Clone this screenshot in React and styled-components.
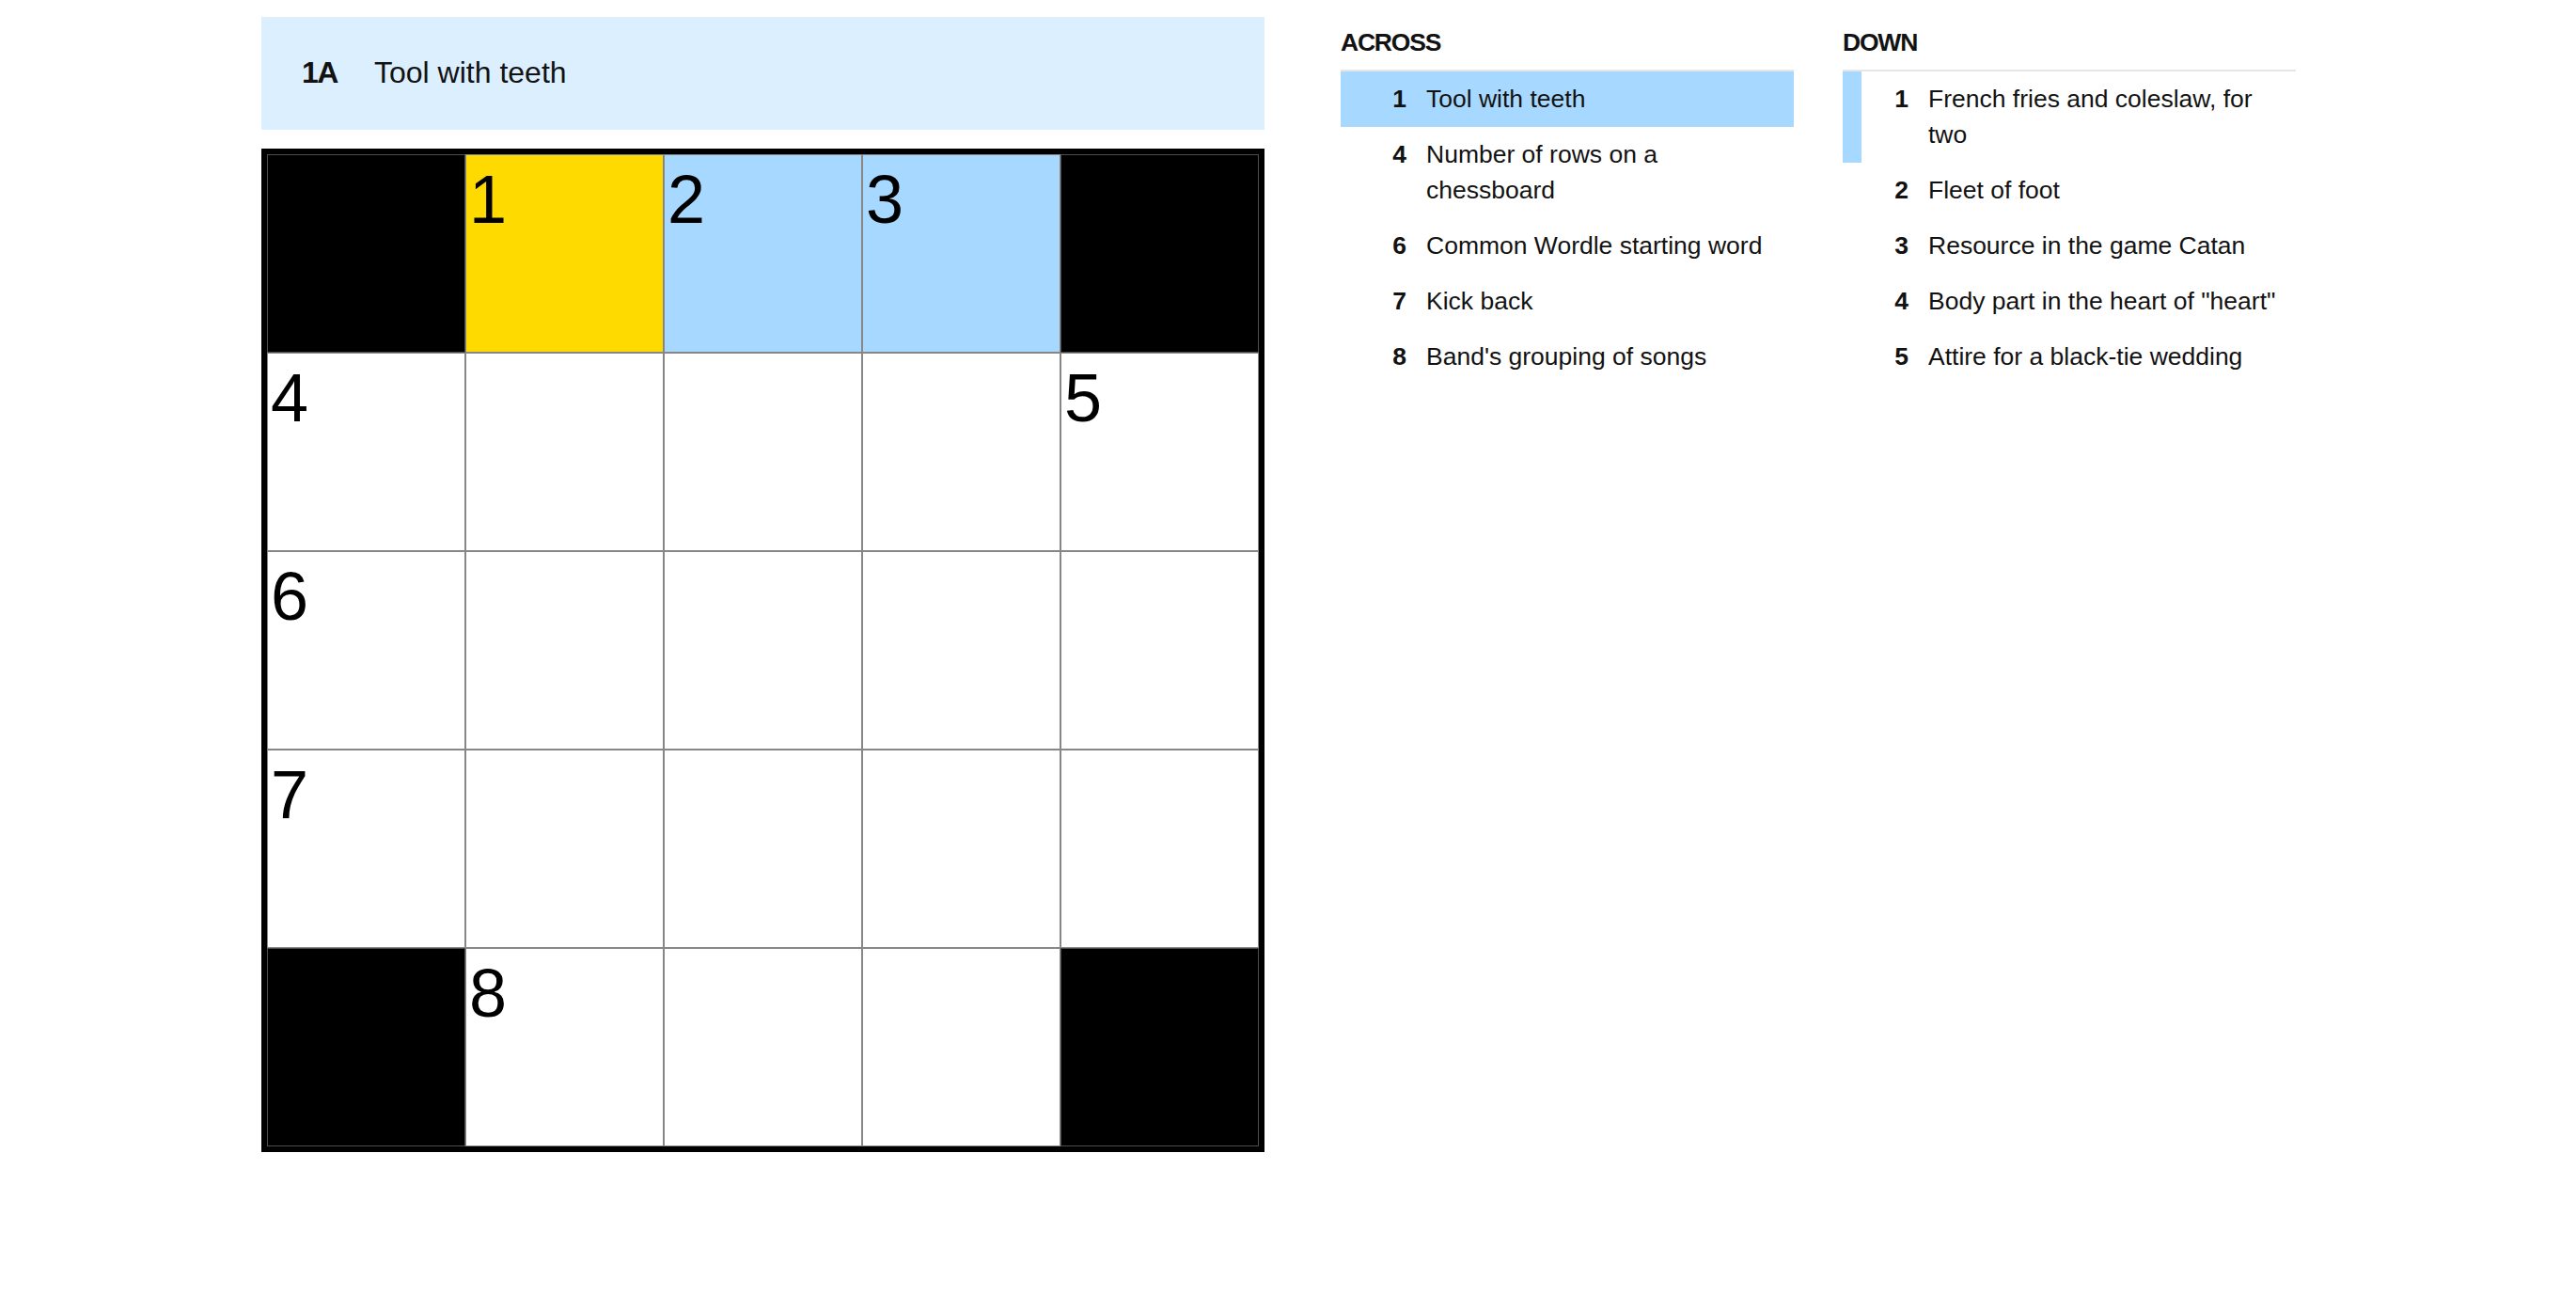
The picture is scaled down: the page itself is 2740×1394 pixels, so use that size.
import React from 'react';
import styled, { createGlobalStyle } from 'styled-components';

const GlobalStyle = createGlobalStyle`
  html, body {
    margin: 0;
    padding: 0;
    background: #ffffff;
  }
  body {
    font-family: "Liberation Sans", Arial, Helvetica, sans-serif;
    color: #121212;
  }
`;

const Page = styled.main`
  display: flex;
  align-items: flex-start;
  gap: 81px;
  padding: 18px 0 0 278px;
`;

const Board = styled.section`
  display: flex;
  flex-direction: column;
  gap: 20px;
  width: 1067px;
`;

const ClueBar = styled.div`
  box-sizing: border-box;
  height: 120px;
  display: flex;
  align-items: center;
  padding: 0 0 2px 43px;
  background: #dcefff;
  font-size: 32px;
  line-height: 1;
`;

const ClueBarLabel = styled.span`
  width: 77px;
  font-weight: 700;
  letter-spacing: -1.5px;
`;

const ClueBarText = styled.span`
  font-weight: 400;
`;

const Grid = styled.div`
  display: grid;
  grid-template-columns: repeat(5, 211px);
  grid-auto-rows: 211px;
  width: max-content;
  border: 6px solid #000000;
`;

const cellFill = {
  block: '#000000',
  active: '#ffda00',
  word: '#a7d8ff',
  open: '#ffffff',
};

const Cell = styled.div`
  box-sizing: border-box;
  border: 1px solid ${(p) => (p.$kind === 'block' ? '#4d4d4d' : '#878787')};
  background: ${(p) => cellFill[p.$kind]};
  padding: 11px 0 0 3px;
  font-family: "Liberation Sans", Arial, Helvetica, sans-serif;
  font-size: 72px;
  line-height: 1;
  color: #000000;
`;

const Lists = styled.div`
  display: grid;
  grid-template-columns: 482px 482px;
  gap: 52px;
`;

const ListColumn = styled.section``;

const ListTitle = styled.h3`
  margin: 0;
  padding: 11px 0 13px;
  border-bottom: 2px solid #e6e6e6;
  font-size: 26.5px;
  line-height: 32px;
  font-weight: 700;
  letter-spacing: -1.2px;
  text-transform: uppercase;
`;

const ClueList = styled.ol`
  list-style: none;
  margin: 0;
  padding: 0;
`;

const ClueItem = styled.li`
  display: flex;
  align-items: flex-start;
  padding: 10px 14px 11px 0;
  border-left: 20px solid ${(p) => (p.$state === 'cross' ? '#a7d8ff' : 'transparent')};
  background: ${(p) => (p.$state === 'active' ? '#a7d8ff' : 'transparent')};
  font-size: 26.5px;
  line-height: 38px;
`;

const ClueNum = styled.span`
  flex: 0 0 50px;
  text-align: right;
  font-weight: 700;
`;

const ClueText = styled.span`
  flex: 1;
  margin-left: 21px;
`;

// B = block, A = active square, W = rest of the active word, . = open square
const layout = [
  ['B', 'A', 'W', 'W', 'B'],
  ['.', '.', '.', '.', '.'],
  ['.', '.', '.', '.', '.'],
  ['.', '.', '.', '.', '.'],
  ['B', '.', '.', '.', 'B'],
];

const numbers = {
  '0-1': 1,
  '0-2': 2,
  '0-3': 3,
  '1-0': 4,
  '1-4': 5,
  '2-0': 6,
  '3-0': 7,
  '4-1': 8,
};

const kindOf = { B: 'block', A: 'active', W: 'word', '.': 'open' };

const across = [
  { n: 1, text: 'Tool with teeth', state: 'active' },
  { n: 4, text: 'Number of rows on a chessboard' },
  { n: 6, text: 'Common Wordle starting word' },
  { n: 7, text: 'Kick back' },
  { n: 8, text: "Band's grouping of songs" },
];

const down = [
  { n: 1, text: 'French fries and coleslaw, for two', state: 'cross' },
  { n: 2, text: 'Fleet of foot' },
  { n: 3, text: 'Resource in the game Catan' },
  { n: 4, text: 'Body part in the heart of "heart"' },
  { n: 5, text: 'Attire for a black-tie wedding' },
];

function ClueColumn({ title, clues }) {
  return (
    <ListColumn>
      <ListTitle>{title}</ListTitle>
      <ClueList>
        {clues.map((c) => (
          <ClueItem key={c.n} $state={c.state}>
            <ClueNum>{c.n}</ClueNum>
            <ClueText>{c.text}</ClueText>
          </ClueItem>
        ))}
      </ClueList>
    </ListColumn>
  );
}

export default function App() {
  return (
    <>
      <GlobalStyle />
      <Page>
        <Board>
          <ClueBar>
            <ClueBarLabel>1A</ClueBarLabel>
            <ClueBarText>Tool with teeth</ClueBarText>
          </ClueBar>
          <Grid>
            {layout.map((row, r) =>
              row.map((k, c) => (
                <Cell key={`${r}-${c}`} $kind={kindOf[k]}>
                  {numbers[`${r}-${c}`] ?? ''}
                </Cell>
              ))
            )}
          </Grid>
        </Board>
        <Lists>
          <ClueColumn title="Across" clues={across} />
          <ClueColumn title="Down" clues={down} />
        </Lists>
      </Page>
    </>
  );
}
